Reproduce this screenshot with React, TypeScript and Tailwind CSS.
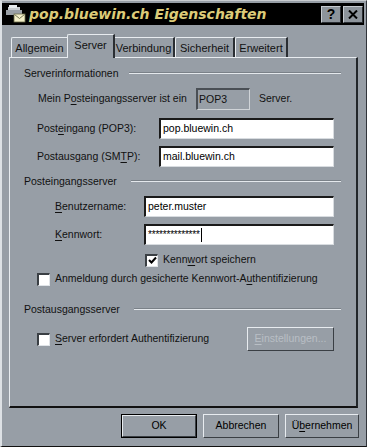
import React from "react";

const BG = "bg-[#979ea6]";

function U({ children }: { children: React.ReactNode }) {
  return <span className="underline underline-offset-[2px] decoration-1">{children}</span>;
}

function Heading({ label, lineStart }: { label: string; lineStart: number }) {
  return (
    <div className="flex items-center h-[14px] ml-[14px] mr-[15px]">
      <span className="leading-[14px]">{label}</span>
      <div className="flex-1 flex flex-col" style={{ marginLeft: lineStart }}>
        <div className="h-px bg-[#7a8188]" />
        <div className="h-px bg-[#e4e8ec]" />
      </div>
    </div>
  );
}

function Input({ value, w, children }: { value?: string; w: number; children?: React.ReactNode }) {
  return (
    <div
      className="h-[21px] bg-white border-t-2 border-l-2 border-t-[#1a1a1a] border-l-[#1a1a1a] border-b border-r border-b-[#d8dce0] border-r-[#d8dce0] flex items-center pl-[2px] text-black"
      style={{ width: w }}
    >
      {value}
      {children}
    </div>
  );
}

function Check({ checked }: { checked?: boolean }) {
  return (
    <div className="w-[13px] h-[13px] bg-white border-t-2 border-l-2 border-t-[#3a3f44] border-l-[#3a3f44] border-b border-r border-b-[#e0e4e8] border-r-[#e0e4e8] flex items-center justify-center shrink-0">
      {checked && (
        <svg width="9" height="9" viewBox="0 0 9 9">
          <path d="M1 4 L3.5 6.5 L8 1.5" stroke="#000" strokeWidth="2" fill="none" />
        </svg>
      )}
    </div>
  );
}

function Btn({ children, w, bold, disabled }: { children: React.ReactNode; w: number; bold?: boolean; disabled?: boolean }) {
  return (
    <div
      className={`h-[24px] flex items-center justify-center ${bold ? "border border-black" : ""}`}
      style={{ width: w }}
    >
      <div className="w-full h-full border-t border-l border-t-[#e8ecf0] border-l-[#e8ecf0] border-b border-r border-b-[#3a3f44] border-r-[#3a3f44] flex items-center justify-center">
        <span className={disabled ? "text-[#b9bfc5]" : "text-black"}>{children}</span>
      </div>
    </div>
  );
}

function Tab({ label, selected, w }: { label: string; selected?: boolean; w: number }) {
  return (
    <div
      className={`flex items-center justify-center border-t border-l border-t-[#e8ecf0] border-l-[#e8ecf0] border-r-2 border-r-[#2a2e33] rounded-tl-[2px] ${
        selected ? "h-[24px] -mx-[2px] z-10 " + BG + " -mb-px pb-[3px]" : "h-[20px] pt-[1px]"
      }`}
      style={{ width: w }}
    >
      {label}
    </div>
  );
}

export default function App() {
  return (
    <div
      className={`w-[367px] h-[447px] ${BG} text-[10.5px] text-[#111] relative border-l-2 border-t border-l-[#dde1e5] border-t-[#c8ccd0] border-r border-b border-r-[#30343a] border-b-[#111]`}
      style={{ fontFamily: '"Liberation Sans", Arial, sans-serif' }}
    >
      {/* Title bar */}
      <div className="mt-[2px] mr-[2px] h-[22px] bg-black flex items-center">
        <svg width="20" height="18" viewBox="0 0 20 18" className="ml-[4px]">
          <rect x="2" y="2" width="12" height="6" fill="#c8ccd0" />
          <rect x="0" y="5" width="16" height="5" fill="#9aa0a6" />
          <rect x="3" y="0" width="8" height="3" fill="#e8ecef" />
          <rect x="8" y="9" width="11" height="8" fill="#f2efc8" stroke="#6a6a48" strokeWidth="0.8" />
          <path d="M8.5 9.5 L13.5 13.5 L18.5 9.5" stroke="#6a6a48" strokeWidth="0.9" fill="none" />
        </svg>
        <span
          className="ml-[3px] text-[#dccb78] font-bold italic text-[14px] leading-none"
          style={{ fontFamily: '"DejaVu Sans", Verdana, sans-serif' }}
        >
          pop.bluewin.ch Eigenschaften
        </span>
        <div className="ml-auto flex gap-[2px] mr-[1px]">
          <div className="w-[20px] h-[17px] bg-[#8d949b] border-t border-l border-t-[#c6cbd0] border-l-[#c6cbd0] border-b border-r border-b-[#2a2e33] border-r-[#2a2e33] flex items-center justify-center font-bold text-[14px] text-black leading-none">
            ?
          </div>
          <div className="w-[20px] h-[17px] bg-[#8d949b] border-t border-l border-t-[#c6cbd0] border-l-[#c6cbd0] border-b border-r border-b-[#2a2e33] border-r-[#2a2e33] flex items-center justify-center">
            <svg width="10" height="9" viewBox="0 0 10 9">
              <path d="M1 0.5 L9 8.5 M9 0.5 L1 8.5" stroke="#000" strokeWidth="2" />
            </svg>
          </div>
        </div>
      </div>

      {/* Tabs */}
      <div className="flex items-end mt-[8px] ml-[9px] h-[24px] relative z-10 text-[11px]">
        <Tab label="Allgemein" w={58} />
        <Tab label="Server" w={48} selected />
        <Tab label="Verbindung" w={62} />
        <Tab label="Sicherheit" w={60} />
        <Tab label="Erweitert" w={53} />
      </div>

      {/* Panel */}
      <div className="ml-[7px] w-[349px] h-[351px] border-t border-l border-t-[#e8ecf0] border-l-[#e8ecf0] border-r-2 border-b-2 border-r-[#22262a] border-b-[#111] flex flex-col">
        <div className="mt-[8px]">
          <Heading label="Serverinformationen" lineStart={10} />
        </div>
        <div className="flex items-center mt-[8px] h-[22px]">
          <span className="ml-[28px] w-[158px]">
            Mein P<U>o</U>steingangsserver ist ein
          </span>
          <div className="w-[54px] h-[22px] border-t-2 border-l-2 border-t-[#4a4f55] border-l-[#4a4f55] border-b border-r border-b-[#d0d4d8] border-r-[#d0d4d8] flex items-start pt-[2px] pl-[1px]">
            POP3
          </div>
          <span className="ml-[9px]">Server.</span>
        </div>
        <div className="flex items-center mt-[8px]">
          <span className="ml-[27px] w-[122px]">
            Post<U>e</U>ingang (POP3):
          </span>
          <Input value="pop.bluewin.ch" w={175} />
        </div>
        <div className="flex items-center mt-[7px]">
          <span className="ml-[27px] w-[122px]">
            Postausgang (SM<U>T</U>P):
          </span>
          <Input value="mail.bluewin.ch" w={175} />
        </div>
        <div className="mt-[7px]">
          <Heading label="Posteingangsserver" lineStart={14} />
        </div>
        <div className="flex items-center mt-[8px]">
          <span className="ml-[45px] w-[89px]">
            <U>B</U>enutzername:
          </span>
          <Input value="peter.muster" w={190} />
        </div>
        <div className="flex items-center mt-[7px]">
          <span className="ml-[45px] w-[89px]">
            <U>K</U>ennwort:
          </span>
          <Input w={190}>
            <span className="text-[10px] leading-none tracking-[-0.2px]">**************</span>
            <span className="w-px h-[14px] bg-black ml-px" />
          </Input>
        </div>
        <div className="flex items-center mt-[8px] ml-[135px] h-[14px]">
          <Check checked />
          <span className="ml-[5px]">
            Kenn<U>w</U>ort speichern
          </span>
        </div>
        <div className="flex items-center mt-[5px] ml-[27px] h-[14px]">
          <Check />
          <span className="ml-[5px]">
            Anmeldung durch gesicherte Kennwort-A<U>u</U>thentifizierung
          </span>
        </div>
        <div className="mt-[16px]">
          <Heading label="Postausgangsserver" lineStart={14} />
        </div>
        <div className="flex items-center mt-[11px] h-[24px]">
          <div className="ml-[27px] flex items-center w-[210px]">
            <Check />
            <span className="ml-[5px]">
              <U>S</U>erver erfordert Authentifizierung
            </span>
          </div>
          <Btn w={87} disabled>
            <U>E</U>instellungen...
          </Btn>
        </div>
      </div>

      {/* Buttons */}
      <div className="flex mt-[6px] ml-[119px] gap-[6px]">
        <Btn w={76} bold>
          OK
        </Btn>
        <Btn w={76}>Abbrechen</Btn>
        <Btn w={74}>
          Ü<U>b</U>ernehmen
        </Btn>
      </div>
    </div>
  );
}
